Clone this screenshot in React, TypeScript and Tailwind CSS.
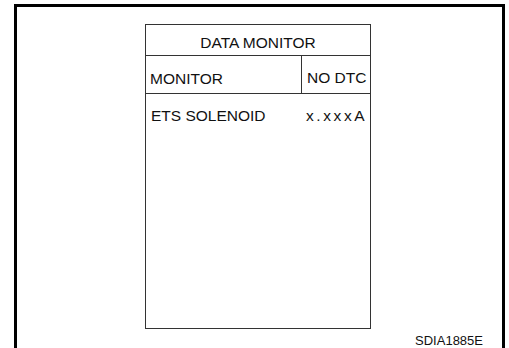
export default function App() {
  return (
    <div
      className="w-[509px] h-[348px] overflow-hidden bg-white text-[#111]"
      style={{ fontFamily: '"Liberation Sans", Arial, sans-serif' }}
    >
      <div className="ml-[14px] mt-[4px] w-[491px] h-[400px] border-x-[3px] border-t-[3px] border-black">
        <div className="pl-[128px] pt-[17px]">
          <div className="w-[226px] h-[305px] border border-[#333] flex flex-col">
            <div className="h-[31px] border-b border-[#333] flex items-start justify-center pt-[9px] text-[15.5px] leading-[17px]">
              DATA MONITOR
            </div>
            <div className="h-[38px] border-b border-[#333] grid grid-cols-[156px_68px] text-[15.5px] leading-[17px]">
              <div className="border-r border-[#333] pl-[4px] pt-[14px]">MONITOR</div>
              <div className="pl-[5px] pt-[13px]">NO DTC</div>
            </div>
            <div className="grid grid-cols-[156px_68px] text-[15.5px] leading-[17px] pt-[13px]">
              <div className="pl-[5px]">ETS SOLENOID</div>
              <div className="pl-[4px] tracking-[2.6px]">x.xxxA</div>
            </div>
          </div>
        </div>
        <div className="flex justify-end pr-[19px] mt-[4px] text-[13px] leading-[15px]">
          SDIA1885E
        </div>
      </div>
    </div>
  );
}
